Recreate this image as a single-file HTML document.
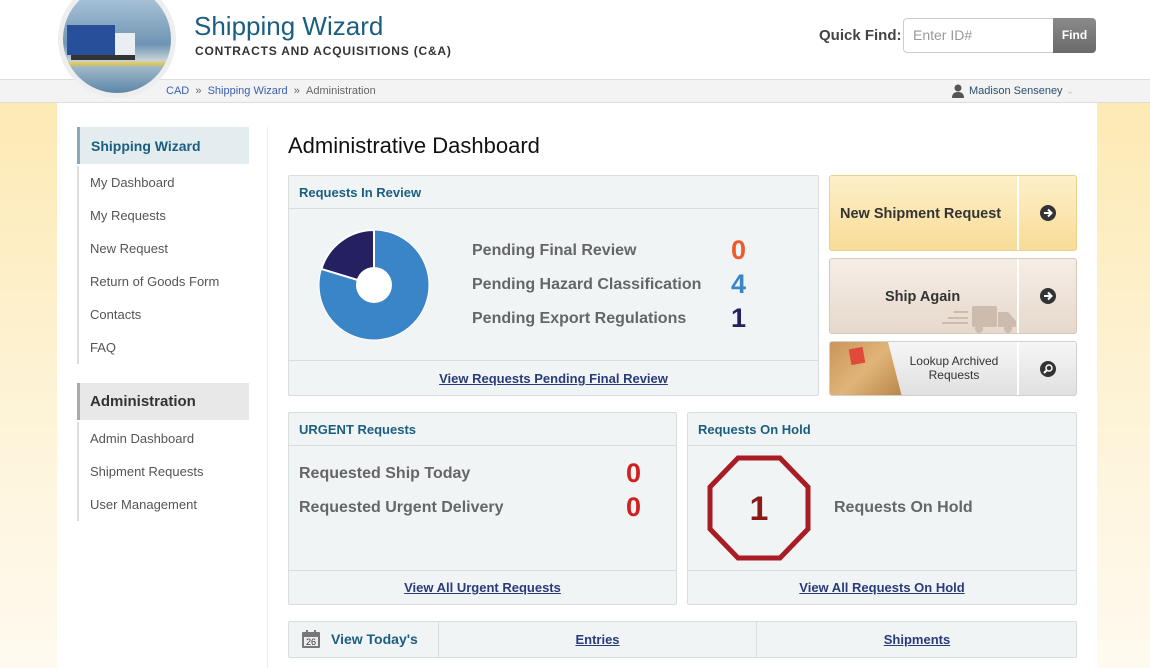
<!DOCTYPE html>
<html><head><meta charset="utf-8"><style>
*{margin:0;padding:0;box-sizing:border-box}
body{width:1150px;height:668px;overflow:hidden;font-family:"Liberation Sans",Arial,sans-serif;background:linear-gradient(#fde6a8,#fdf3d6 60%,#fffaf0);position:relative}
.a{position:absolute}
.top{left:0;top:0;width:1150px;height:79px;background:#fff}
.bc{left:0;top:79px;width:1150px;height:24px;background:#f3f3f3;border-top:1px solid #ddd;border-bottom:1px solid #ddd;font-size:11px;color:#666}
.main{left:57px;top:103px;width:1040px;height:565px;background:#fff}
.side{position:absolute;left:77px;width:172px;height:33px;border-left:2px solid #ddd;font-size:13px;color:#555;padding-left:11px;line-height:33px}
.panel{position:absolute;background:#f1f4f5;border:1px solid #d8dde0;border-radius:2px}
.ph{height:33px;border-bottom:1px solid #d8dde0;font-weight:bold;font-size:13px;color:#1a5e80;padding-left:10px;line-height:33px}
.lnk{color:#2a3b7a;text-decoration:underline;font-weight:bold;font-size:13px}
.lbl{position:absolute;font-weight:bold;font-size:16px;color:#666}
.num{position:absolute;font-weight:bold;font-size:27px}
.btn{position:absolute;left:829px;width:248px;border-radius:3px}
.arr{position:absolute;right:0;top:0;bottom:0;width:59px;border-left:2px solid #fff;display:flex;align-items:center;justify-content:center}
</style></head><body>
<div class="a top"></div>
<div class="a bc"></div>
<div class="a main"></div>
<div class="a" style="left:58px;top:-20px;width:118px;height:118px;border-radius:50%;background:#eee;padding:5px">
<div style="width:108px;height:108px;border-radius:50%;overflow:hidden;background:linear-gradient(#b8cfe0,#6f94b4 55%,#c8d4d8 70%,#e2c64a 73%,#9fb8c8 76%,#5c86a8);position:relative">
<div style="position:absolute;left:4px;top:40px;width:48px;height:30px;background:#274f9a"></div>
<div style="position:absolute;left:52px;top:48px;width:20px;height:22px;background:#e8eef2"></div>
<div style="position:absolute;left:8px;top:70px;width:64px;height:5px;background:#333"></div>
</div></div>
<div class="a" style="left:194px;top:11px;font-size:26px;color:#1a5e80">Shipping Wizard</div>
<div class="a" style="left:195px;top:44px;font-size:12px;font-weight:bold;color:#333;letter-spacing:0.8px">CONTRACTS AND ACQUISITIONS (C&amp;A)</div>
<div class="a" style="left:819px;top:27px;font-size:15px;font-weight:bold;color:#444">Quick Find:</div>
<div class="a" style="left:903px;top:18px;width:152px;height:35px;border:1px solid #ccc;border-radius:4px 0 0 4px;background:#fff;font-size:14px;color:#999;padding:8px 9px">Enter ID#</div>
<div class="a" style="left:1053px;top:18px;width:43px;height:35px;border-radius:0 4px 4px 0;background:linear-gradient(#8a8a8a,#6a6a6a);color:#fff;font-weight:bold;font-size:12px;text-align:center;line-height:35px">Find</div>
<div class="a" style="left:166px;top:85px;font-size:11px;color:#666;line-height:13px"><span style="color:#3a5fb0">CAD</span> &nbsp;» &nbsp;<span style="color:#3a5fb0">Shipping Wizard</span> &nbsp;» &nbsp;Administration</div>
<svg class="a" style="left:952px;top:84px" width="12" height="15"><circle cx="6" cy="4" r="3.5" fill="#555"/><path d="M0 14 Q0 8 6 8 Q12 8 12 14Z" fill="#555"/></svg>
<div class="a" style="left:969px;top:85px;font-size:11px;color:#2a4f70;line-height:13px">Madison Senseney <span style="color:#ccc">⌄</span></div>
<div class="a" style="left:77px;top:127px;width:172px;height:37px;background:#e3ecef;border-left:3px solid #8aa8b8;font-weight:bold;font-size:14px;color:#1a5e80;padding-left:11px;line-height:38px">Shipping Wizard</div>
<div class="side" style="top:166px">My Dashboard</div>
<div class="side" style="top:199px">My Requests</div>
<div class="side" style="top:232px">New Request</div>
<div class="side" style="top:265px">Return of Goods Form</div>
<div class="side" style="top:298px">Contacts</div>
<div class="side" style="top:331px">FAQ</div>
<div class="a" style="left:77px;top:383px;width:172px;height:37px;background:#e8e8e8;border-left:3px solid #aaa;font-weight:bold;font-size:15px;color:#333;padding-left:10px;line-height:38px">Administration</div>
<div class="side" style="top:422px">Admin Dashboard</div>
<div class="side" style="top:455px">Shipment Requests</div>
<div class="side" style="top:488px">User Management</div>
<div class="a" style="left:267px;top:127px;width:1px;height:541px;background:#eee"></div>
<div class="a" style="left:288px;top:133px;font-size:22px;color:#111">Administrative Dashboard</div>
<div class="panel" style="left:288px;top:175px;width:531px;height:221px">
<div class="ph">Requests In Review</div>
<div style="position:absolute;left:0;right:0;top:184px;border-top:1px solid #d8dde0;text-align:center;padding-top:9px"><span class="lnk">View Requests Pending Final Review</span></div>
</div>
<svg class="a" style="left:318px;top:229px" width="112" height="112"><circle cx="56" cy="56" r="55" fill="#3a84c8" stroke="#fff" stroke-width="1"/><path d="M56 56 L56 1 A55 55 0 0 0 3.4 39.9Z" fill="#252060" stroke="#fff" stroke-width="2"/><circle cx="56" cy="56" r="18" fill="#fff"/></svg>
<div class="lbl" style="left:472px;top:242px">Pending Final Review</div>
<div class="lbl" style="left:472px;top:276px">Pending Hazard Classification</div>
<div class="lbl" style="left:472px;top:310px">Pending Export Regulations</div>
<div class="num" style="left:731px;top:235px;color:#ef5a2c">0</div>
<div class="num" style="left:731px;top:269px;color:#3a84c8">4</div>
<div class="num" style="left:731px;top:303px;color:#252060">1</div>
<div class="btn" style="top:175px;height:76px;background:linear-gradient(#fdf0c8,#f8dc98);border:1px solid #ecd08e">
<div style="position:absolute;left:10px;top:30px;font-weight:bold;font-size:14.5px;color:#333">New Shipment Request</div>
<div class="arr"><svg width="16" height="16"><circle cx="8" cy="8" r="8" fill="#333"/><path d="M4 8h7M8 4.5l3.5 3.5L8 11.5" stroke="#fff" stroke-width="2" fill="none"/></svg></div></div>
<div class="btn" style="top:258px;height:76px;background:linear-gradient(#f6eee6,#e6d8cc);border:1px solid #d8c8b8;overflow:hidden">
<svg style="position:absolute;left:112px;top:40px" width="75" height="36"><g fill="#cdbcae"><rect x="30" y="7" width="25" height="21" rx="2"/><path d="M56 13h10l8 9v6H56z"/><circle cx="37" cy="30" r="4"/><circle cx="66" cy="30" r="4"/><rect x="12" y="12" width="14" height="2"/><rect x="6" y="18" width="20" height="2"/><rect x="0" y="23" width="26" height="2"/></g></svg>
<div style="position:absolute;left:55px;top:30px;font-weight:bold;font-size:14.5px;color:#333">Ship Again</div>
<div class="arr"><svg width="16" height="16"><circle cx="8" cy="8" r="8" fill="#333"/><path d="M4 8h7M8 4.5l3.5 3.5L8 11.5" stroke="#fff" stroke-width="2" fill="none"/></svg></div></div>
<div class="btn" style="top:341px;height:55px;background:linear-gradient(#f6f6f6,#e0e0e0);border:1px solid #d0d0d0;overflow:hidden">
<div style="position:absolute;left:0;top:0;width:72px;height:55px;background:linear-gradient(135deg,#c9955a,#e0b478 50%,#b88448);clip-path:polygon(0 0,58px 0,72px 55px,0 55px)"></div>
<div style="position:absolute;left:20px;top:6px;width:14px;height:16px;background:#e04a3a;transform:rotate(-10deg)"></div>
<div style="position:absolute;left:60px;top:12px;width:128px;text-align:center;font-size:12px;color:#333;line-height:14px">Lookup Archived<br>Requests</div>
<div class="arr"><svg width="16" height="16"><circle cx="8" cy="8" r="8" fill="#333"/><circle cx="9" cy="7" r="3" stroke="#fff" stroke-width="1.5" fill="none"/><path d="M7 9l-3 3" stroke="#fff" stroke-width="2"/></svg></div></div>
<div class="panel" style="left:288px;top:412px;width:389px;height:193px">
<div class="ph">URGENT Requests</div>
<div style="position:absolute;left:0;right:0;top:157px;border-top:1px solid #d8dde0;text-align:center;padding-top:8px"><span class="lnk">View All Urgent Requests</span></div></div>
<div class="lbl" style="left:299px;top:465px">Requested Ship Today</div>
<div class="lbl" style="left:299px;top:499px">Requested Urgent Delivery</div>
<div class="num" style="left:626px;top:458px;color:#d02020">0</div>
<div class="num" style="left:626px;top:492px;color:#d02020">0</div>
<div class="panel" style="left:687px;top:412px;width:390px;height:193px">
<div class="ph">Requests On Hold</div>
<div style="position:absolute;left:0;right:0;top:157px;border-top:1px solid #d8dde0;text-align:center;padding-top:8px"><span class="lnk">View All Requests On Hold</span></div></div>
<svg class="a" style="left:705px;top:455px" width="108" height="106"><polygon points="33,3 75,3 103,32 103,74 75,103 33,103 5,74 5,32" fill="none" stroke="#a81c24" stroke-width="5"/><text x="54" y="65" text-anchor="middle" font-family="Liberation Sans" font-weight="bold" font-size="34" fill="#8a1a1a">1</text></svg>
<div class="lbl" style="left:834px;top:499px">Requests On Hold</div>
<div class="panel" style="left:288px;top:621px;width:789px;height:37px">
<svg style="position:absolute;left:12px;top:7px" width="20" height="20"><rect x="1" y="3" width="18" height="16" rx="1" fill="#777"/><rect x="3" y="8" width="14" height="9" fill="#eee"/><rect x="5" y="1" width="2" height="4" fill="#777"/><rect x="13" y="1" width="2" height="4" fill="#777"/><text x="10" y="16" text-anchor="middle" font-family="Liberation Sans" font-size="9" fill="#333">26</text></svg>
<div style="position:absolute;left:42px;top:9px;font-weight:bold;font-size:14px;color:#1a5e80">View Today's</div>
<div style="position:absolute;left:149px;top:0;width:319px;height:35px;border-left:1px solid #d8dde0;border-right:1px solid #d8dde0;text-align:center;line-height:35px"><span class="lnk">Entries</span></div>
<div style="position:absolute;left:468px;top:0;width:320px;height:35px;text-align:center;line-height:35px"><span class="lnk">Shipments</span></div>
</div>
</body></html>
